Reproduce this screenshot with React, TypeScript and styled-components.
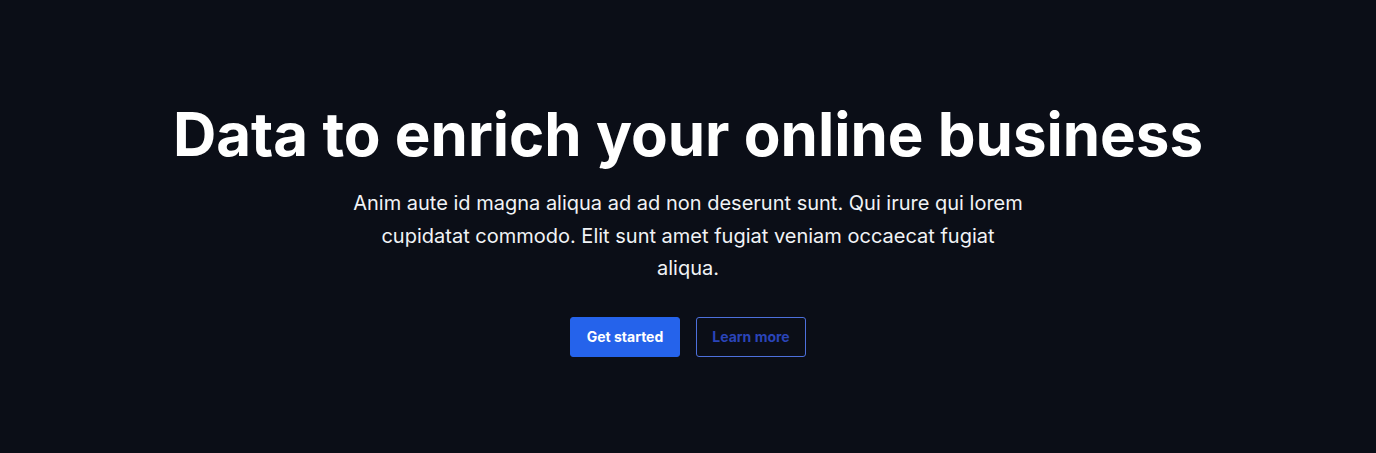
import React from "react";
import styled, { createGlobalStyle } from "styled-components";

const Global = createGlobalStyle`
  html, body { margin: 0; padding: 0; background: #0b0e17; }
  body { font-family: Inter, "Noto Sans", sans-serif; -webkit-font-smoothing: antialiased; }
`;

const Hero = styled.section`
  min-height: 453px;
  box-sizing: border-box;
  background: #0b0e17;
  padding: 104px 24px 0;
  display: flex;
  flex-direction: column;
  align-items: center;
  text-align: center;
`;

const Title = styled.h1`
  margin: 0;
  font-size: 60px;
  line-height: 60px;
  font-weight: 700;
  color: #ffffff;
`;

const Lead = styled.p`
  margin: 23px 0 0;
  max-width: 672px;
  font-size: 20px;
  line-height: 32.5px;
  color: #f1f3f6;
`;

const Actions = styled.div`
  margin-top: 32px;
  display: flex;
  gap: 16px;
`;

const Button = styled.a<{ $variant: "primary" | "outline" }>`
  box-sizing: border-box;
  width: 110px;
  height: 40px;
  display: inline-flex;
  align-items: center;
  justify-content: center;
  border-radius: 3px;
  font-size: 14px;
  font-weight: 700;
  text-decoration: none;
  cursor: pointer;
  background: ${(p) => (p.$variant === "primary" ? "#2563eb" : "transparent")};
  color: ${(p) => (p.$variant === "primary" ? "#ffffff" : "#2a44b8")};
  border: 1px solid ${(p) => (p.$variant === "primary" ? "#2563eb" : "#4d70dc")};
`;

export default function App() {
  return (
    <>
      <Global />
      <Hero>
        <Title>Data to enrich your online business</Title>
        <Lead>
          Anim aute id magna aliqua ad ad non deserunt sunt. Qui irure qui lorem cupidatat commodo. Elit sunt amet fugiat veniam occaecat fugiat aliqua.
        </Lead>
        <Actions>
          <Button $variant="primary" href="#">Get started</Button>
          <Button $variant="outline" href="#">Learn more</Button>
        </Actions>
      </Hero>
    </>
  );
}
